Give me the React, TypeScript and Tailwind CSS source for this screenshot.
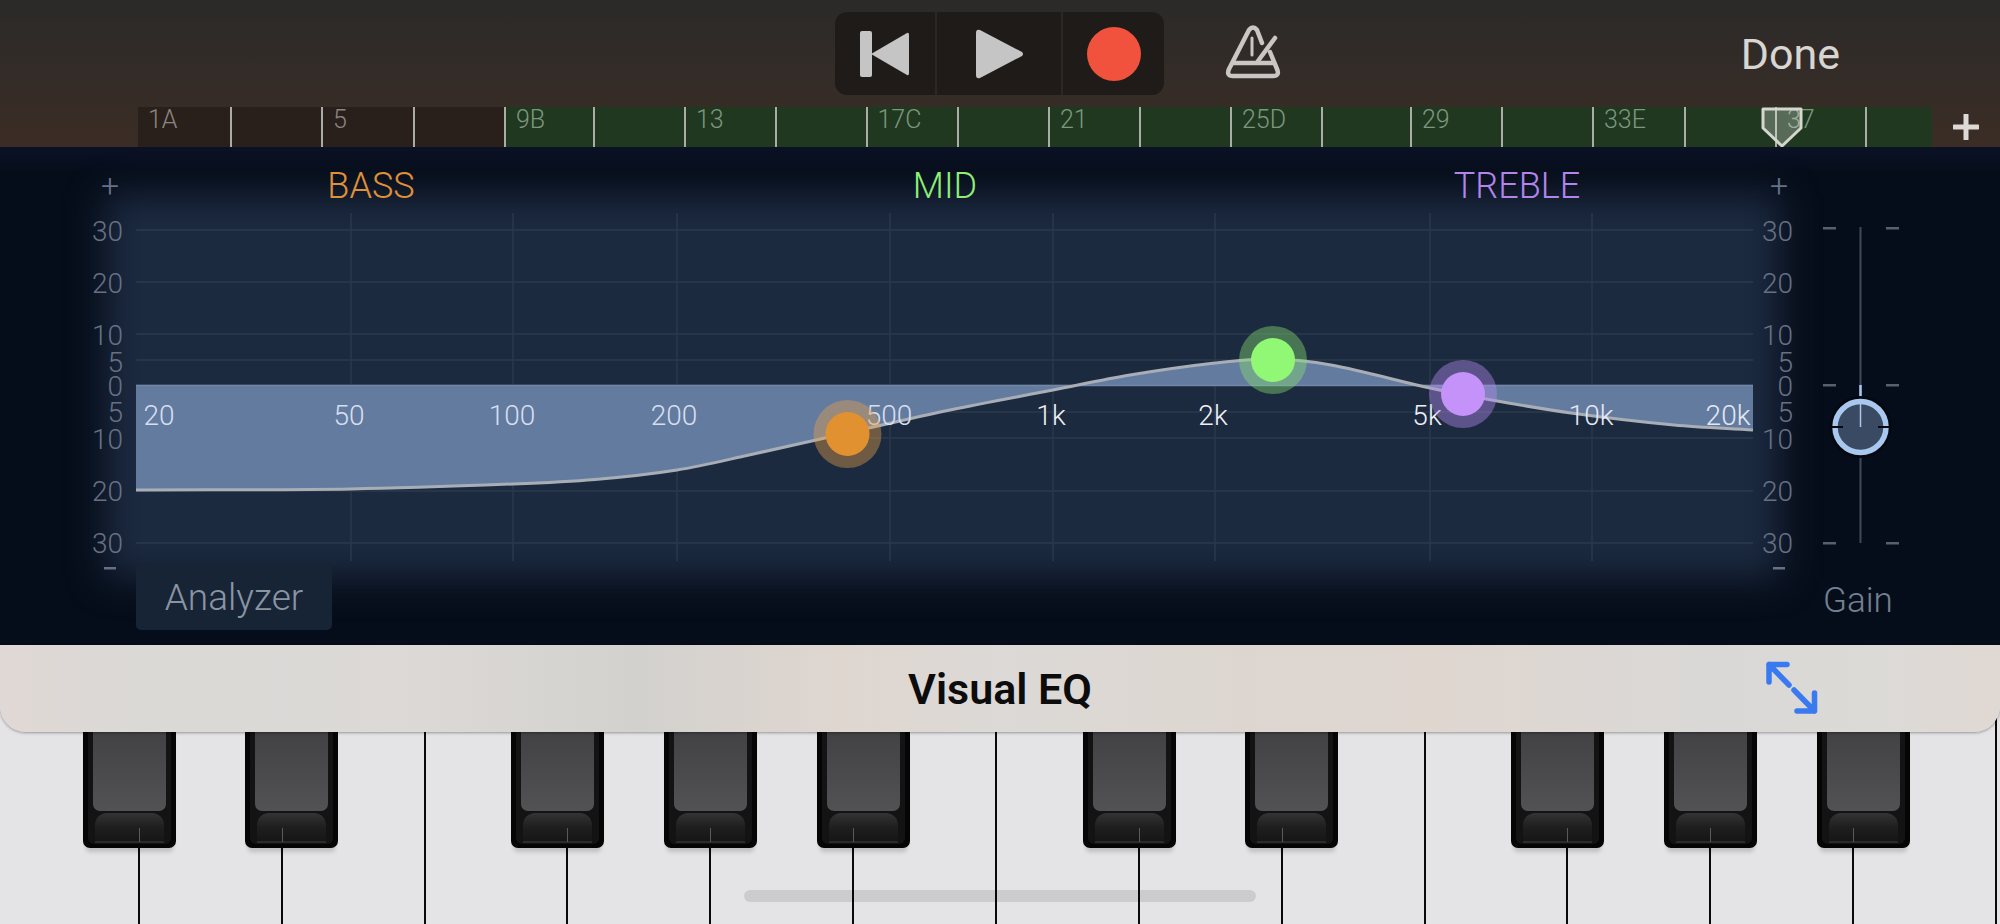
import React from 'react';

const SANS = 'font-["Roboto","Liberation_Sans",Arial,sans-serif]';

// Timeline cells: left edge of the ruler is x=138
const cells = [
    { w: 92, label: '1A' },
    { w: 91, label: '' },
    { w: 92, label: '5' },
    { w: 91, label: '' },
    { w: 88.5, label: '9B', green: true },
    { w: 91.5, label: '', green: true },
    { w: 91, label: '13', green: true },
    { w: 90.5, label: '', green: true },
    { w: 91.5, label: '17C', green: true },
    { w: 91, label: '', green: true },
    { w: 91, label: '21', green: true },
    { w: 91, label: '', green: true },
    { w: 91, label: '25D', green: true },
    { w: 89, label: '', green: true },
    { w: 91, label: '29', green: true },
    { w: 91, label: '', green: true },
    { w: 92, label: '33E', green: true },
    { w: 91, label: '', green: true },
    { w: 90, label: '37', green: true },
    { w: 67, label: '', green: true },
];

const dbLines = [230, 282, 334, 360, 385, 412, 438, 491, 543];
const dbLabels = [
    ['30', 231],
    ['20', 283],
    ['10', 335],
    ['5', 362],
    ['0', 386],
    ['5', 412],
    ['10', 439],
    ['20', 491],
    ['30', 543],
] as const;

const freqLines = [351, 513, 677, 890, 1053, 1215, 1430, 1592];
const freqLabels = [
    ['20', 159, '#d5dff0'],
    ['50', 349, '#d5dff0'],
    ['100', 512, '#d5dff0'],
    ['200', 674, '#d5dff0'],
    ['500', 889, '#d5dff0'],
    ['1k', 1051, '#eef1f5'],
    ['2k', 1213, '#eef1f5'],
    ['5k', 1427, '#eef1f5'],
    ['10k', 1591, '#e3e9f3'],
    ['20k', 1728, '#e3e9f3'],
] as const;

const curve: [number, number][] = [
    [136, 490],
    [351, 489],
    [513, 484],
    [595, 479.5],
    [677, 470],
    [749, 455],
    [847, 433],
    [950, 410],
    [1053, 390],
    [1130, 375],
    [1215, 363],
    [1272, 359],
    [1331, 365],
    [1430, 388],
    [1486, 399],
    [1571, 413],
    [1674, 425],
    [1753, 430],
];

// cubic hermite over x, the points are not evenly spaced
function smooth(points: [number, number][]) {
    const slope = (i: number) => {
        const a = points[Math.max(i - 1, 0)];
        const b = points[Math.min(i + 1, points.length - 1)];
        return (b[1] - a[1]) / (b[0] - a[0]);
    };
    let d = `${points[0][0]} ${points[0][1]}`;
    for (let i = 0; i < points.length - 1; i++) {
        const p1 = points[i];
        const p2 = points[i + 1];
        const dx = (p2[0] - p1[0]) / 3;
        d += ` C${p1[0] + dx} ${p1[1] + slope(i) * dx} ${p2[0] - dx} ${p2[1] - slope(i + 1) * dx} ${p2[0]} ${p2[1]}`;
    }
    return d;
}

const curvePath = smooth(curve);

const nodes = [
    { x: 847.5, y: 434, color: '#e29130', halo: '#e2a04a' },
    { x: 1273, y: 360, color: '#90f874', halo: '#86e070' },
    { x: 1463, y: 394, color: '#c492f8', halo: '#b48cf0' },
];

const blackOffsets = [-9.5, 10, null, -10, 0, 10, null];

function BlackKey({ offset }: { offset: number }) {
    return (
        <div
            className="absolute top-0 z-[1] h-[142px] w-[93px] rounded-b-[7px] bg-[#050505] shadow-[0_7px_4px_-3px_rgba(0,0,0,0.16)]"
            style={{ left: `calc(100% - 45.5px + ${offset}px)` }}
        >
            <div className="absolute bottom-[4px] left-[5px] right-[5px] top-0 rounded-b-[6px] bg-[#131314]" />
            <div className="absolute left-[10px] right-[10px] top-0 h-[105px] rounded-b-[7px] bg-gradient-to-b from-[#3d3c3e] to-[#525154]" />
            <div className="absolute bottom-[7px] left-[12px] right-[12px] h-[28px] rounded-t-[12px] rounded-b-[3px] bg-gradient-to-b from-[#343335] via-[#201f20] to-[#161616]" />
            <div className="absolute bottom-[5px] left-[12px] right-[12px] h-[2px] bg-[#2b2b2c]" />
            <div
                className="absolute bottom-[6px] h-[14px] w-px bg-[#5a595e]"
                style={{ left: `${46.5 - offset}px` }}
            />
        </div>
    );
}

function Metronome() {
    return (
        <svg width="56" height="58" viewBox="-2 -2 56 58" fill="none" stroke="#c9c6c3" strokeWidth="4.5" strokeLinecap="round" strokeLinejoin="round">
            <path d="M35 18 L30 5 Q26 0 22 5 L2 44 Q-1 51 6 51 H46 Q53 51 50 44 L43 27" />
            <path d="M6 38 H46" />
            <path d="M48 13 L31 36" />
            <path d="M25 13 V30" strokeWidth="3" />
        </svg>
    );
}

function ExpandIcon() {
    return (
        <svg width="52" height="54" viewBox="1766 661 52 54" fill="none" stroke="#3a7af0" strokeWidth="5.5" strokeLinecap="round" strokeLinejoin="round">
            <path d="M1789 685 L1769 664.5 M1769 682 V664.5 H1787" />
            <path d="M1794 690 L1814.5 711 M1814.5 693 V711 H1797" />
        </svg>
    );
}

export default function App() {
    return (
        <div className={`flex h-[924px] w-full flex-col overflow-hidden bg-[#e4e3e5] ${SANS}`}>
            {/* transport and ruler */}
            <div className="h-[147px] shrink-0 bg-gradient-to-b from-[#2b2a29] to-[#3b2d25]">
                <div className="flex h-[107px] items-start pl-[835px]">
                    <div className="mt-[12px] flex h-[83px] w-[329px] overflow-hidden rounded-[12px] bg-[#1f1b18]">
                        <div className="flex w-[102px] items-center justify-center border-r-2 border-[#2b2724]">
                            <svg width="50" height="48" viewBox="0 0 50 48">
                                <rect x="0" y="1" width="12" height="46" rx="2" fill="#c5c5c5" />
                                <path d="M11 24 L47 3 Q49 2 49 5 V43 Q49 46 47 45 Z" fill="#c5c5c5" />
                            </svg>
                        </div>
                        <div className="flex w-[126px] items-center justify-center border-r-2 border-[#2b2724]">
                            <svg width="48" height="50" viewBox="0 0 48 50" className="ml-[2px]">
                                <path d="M0 4 Q0 0 4 1 L46 23 Q48 25 46 27 L4 49 Q0 50 0 46 Z" fill="#c5c5c5" />
                            </svg>
                        </div>
                        <div className="flex flex-1 items-center justify-center">
                            <div className="h-[54px] w-[54px] rounded-full bg-[#f0523d]" />
                        </div>
                    </div>
                    <div className="ml-[61px] mt-[23px]">
                        <Metronome />
                    </div>
                    <div className="ml-auto mr-[160px] mt-[29px] text-[43px] leading-[50px] text-[#d8d5d2]">Done</div>
                </div>
                <div className="flex h-[40px] items-stretch pl-[138px]">
                    <div className="relative flex w-[1794px]">
                        {cells.map((cell, i) => (
                            <div
                                key={i}
                                className={`h-full shrink-0 pl-[10px] text-[25px] font-light leading-[26px] ${
                                    cell.green ? 'bg-[#203820] text-[#7c977d]' : 'bg-[#2a201b] text-[#8a8582]'
                                } ${i > 0 ? 'border-l-2 border-[#a9ada6]' : ''}`}
                                style={{ width: cell.w }}
                            >
                                {cell.label}
                            </div>
                        ))}
                        <svg className="absolute left-[1623px] top-0" width="42" height="41" viewBox="0 0 42 41">
                            <path d="M2 2 H40 V21 L21 39 L2 21 Z" fill="#ffffff" fillOpacity="0.25" stroke="#d3d7ce" strokeWidth="3" strokeLinejoin="round" />
                        </svg>
                    </div>
                    <div className="flex flex-1 items-center justify-center text-[#d8d5d2]">
                        <svg width="26" height="26" viewBox="0 0 26 26">
                            <path d="M13 1 V25 M1 13 H25" stroke="#dcd9d6" strokeWidth="5" strokeLinecap="round" />
                        </svg>
                    </div>
                </div>
            </div>

            {/* eq panel */}
            <div className="relative flex h-[498px] shrink-0 overflow-hidden bg-[#060d1a]">
                <div className="absolute inset-x-0 top-0 h-[24px] bg-gradient-to-b from-[#0b1226] to-transparent" />
                <div className="absolute left-[105px] top-[48px] h-[383px] w-[1675px] bg-[#1c2a40] blur-[18px]" />
                <div className="relative w-[1810px] shrink-0">
                    <svg width="1810" height="416" viewBox="0 147 1810 416" className="block overflow-visible" fontFamily="Roboto, 'Liberation Sans', Arial, sans-serif" fontWeight="300">
                        <text x="110" y="197" textAnchor="middle" fontSize="32" fill="#66728a">+</text>
                        <text x="1779" y="197" textAnchor="middle" fontSize="32" fill="#66728a">+</text>
                        <text x="371" y="198" textAnchor="middle" fontSize="36" fill="#e09138">BASS</text>
                        <text x="945" y="198" textAnchor="middle" fontSize="36" fill="#8fef74">MID</text>
                        <text x="1517" y="198" textAnchor="middle" fontSize="36" fill="#b185ec">TREBLE</text>

                        {dbLines.map((y) => (
                            <line key={y} x1="136" x2="1753" y1={y} y2={y} stroke="#273548" strokeWidth="2" />
                        ))}
                        {freqLines.map((x) => (
                            <line key={x} x1={x} x2={x} y1="213" y2="561" stroke="#2a384b" strokeWidth="1.5" />
                        ))}

                        <path d={`M136 385 L${curvePath} L1753 385 Z`} fill="#647ba0" />
                        <line x1="136" x2="1753" y1="385.5" y2="385.5" stroke="#7287a8" strokeWidth="1.5" />
                        <path d={`M${curvePath}`} fill="none" stroke="#a9aeb6" strokeWidth="3" />

                        {dbLabels.map(([t, y], i) => (
                            <React.Fragment key={i}>
                                <text x="123" y={y + 10} textAnchor="end" fontSize="28" fill="#667183">{t}</text>
                                <text x="1793" y={y + 10} textAnchor="end" fontSize="28" fill="#667183">{t}</text>
                            </React.Fragment>
                        ))}
                        <rect x="104" y="567" width="12" height="2.5" fill="#667183" />
                        <rect x="1773" y="567" width="12" height="2.5" fill="#667183" />

                        {freqLabels.map(([t, x, c]) => (
                            <text key={t} x={x} y="425" textAnchor="middle" fontSize="28" fill={c}>{t}</text>
                        ))}

                        {nodes.map((n) => (
                            <g key={n.x}>
                                <circle cx={n.x} cy={n.y} r="34" fill={n.halo} fillOpacity="0.42" />
                                <circle cx={n.x} cy={n.y} r="22" fill={n.color} />
                            </g>
                        ))}
                    </svg>
                    <div className="ml-[136px] flex h-[67px] w-[196px] items-center justify-center rounded-[5px] bg-[#172436] pt-[3px] text-[37px] font-light text-[#8a95a4]">
                        Analyzer
                    </div>
                </div>
                <div className="relative flex-1">
                    <svg width="190" height="416" viewBox="1810 147 190 416" className="block">
                        <line x1="1860.5" x2="1860.5" y1="227" y2="543" stroke="#3e4a5c" strokeWidth="2" />
                        {[228, 385, 543].map((y) => (
                            <g key={y}>
                                <rect x="1823" y={y - 1} width="13" height="2.5" fill="#556071" />
                                <rect x="1886" y={y - 1} width="13" height="2.5" fill="#556071" />
                            </g>
                        ))}
                        <line x1="1860.5" x2="1860.5" y1="385" y2="398" stroke="#a8c8f0" strokeWidth="2.5" />
                        <circle cx="1860.5" cy="427" r="31" fill="#05080f" />
                        <circle cx="1860.5" cy="427" r="25.5" fill="#3a4a62" stroke="#a8c8f0" strokeWidth="5.5" />
                        <rect x="1831" y="426" width="12" height="2" fill="#05080f" />
                        <rect x="1878" y="426" width="12" height="2" fill="#05080f" />
                        <line x1="1860.5" x2="1860.5" y1="404" y2="427" stroke="#a8c8f0" strokeWidth="1.5" />
                    </svg>
                    <div className="mt-[16px] w-[96px] pl-[13px] text-[35px] font-light leading-[44px] text-[#758090]">Gain</div>
                </div>
            </div>

            {/* title bar */}
            <div className="relative z-10 flex h-[87px] shrink-0 items-center justify-center rounded-b-[26px] bg-[linear-gradient(90deg,#e0d8d5_0%,#dad9d6_8%,#dcd9d7_20%,#d3d1ce_32%,#dfd6d0_42%,#dcd9d6_50%,#ddd6d0_62%,#dfd6d0_72%,#dad8d6_85%,#dcdad7_94%,#e0d8d3_100%)] shadow-[0_1px_3px_rgba(0,0,0,0.35)]">
                <span className="pt-[2px] text-[43px] font-semibold text-[#0c0c0c]">Visual EQ</span>
                <div className="absolute left-[1766px] top-[16px]">
                    <ExpandIcon />
                </div>
            </div>

            {/* keyboard runs under the rounded bar */}
            <div className="relative -mt-[26px] flex h-[218px] shrink-0 -translate-x-[3px]">
                {Array.from({ length: 14 }).map((_, i) => {
                    const offset = blackOffsets[i % 7];
                    return (
                        <div key={i} className="relative box-border h-full w-[142.86px] shrink-0 border-r-2 border-[#0a0a0a] bg-[#e4e3e5]">
                            {offset !== null && <BlackKey offset={offset} />}
                        </div>
                    );
                })}
                <div className="absolute left-[747px] top-[184px] z-10 h-[12px] w-[512px] rounded-full bg-black/10" />
            </div>
        </div>
    );
}
